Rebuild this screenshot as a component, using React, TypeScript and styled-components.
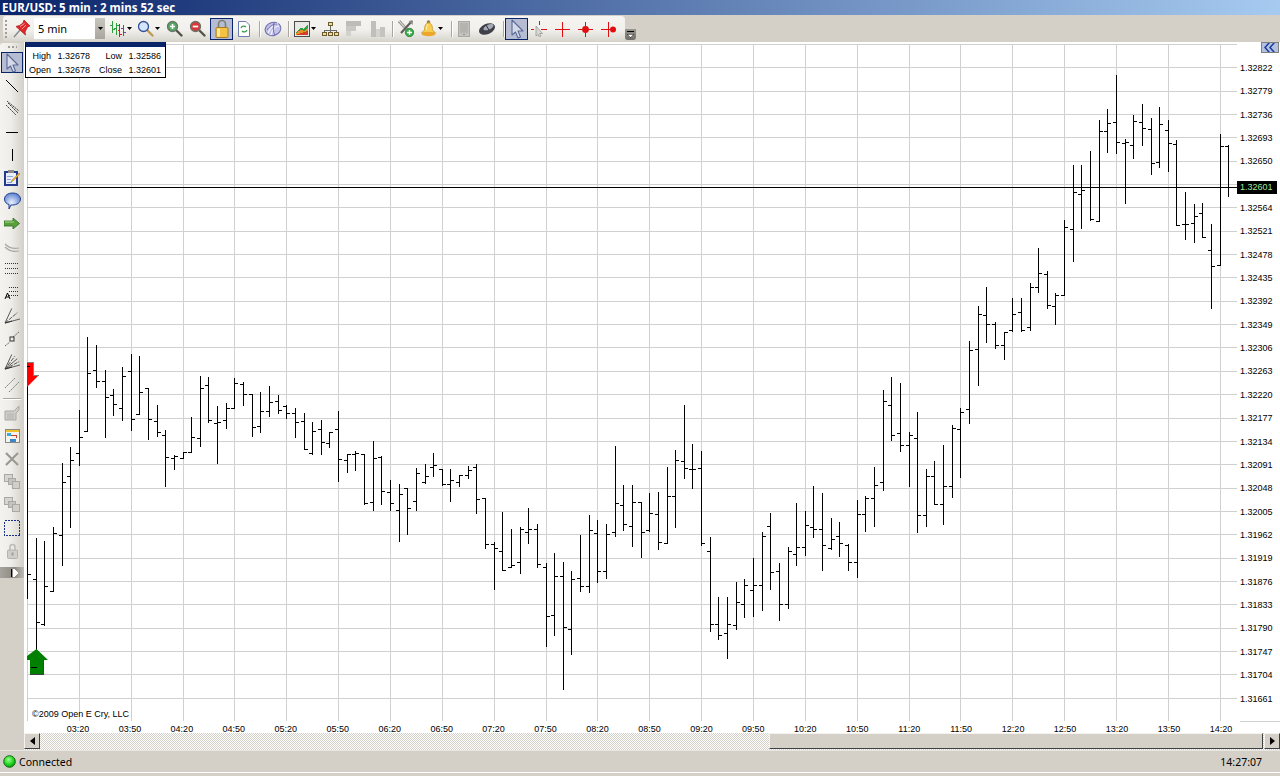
import React from "react";
import styled, { createGlobalStyle } from "styled-components";

const Global = createGlobalStyle`
  html, body { margin: 0; padding: 0; background: #d4d0c8; overflow: hidden; }
  #root { width: 1280px; height: 776px; }
`;

const UI = `"Noto Sans", "Liberation Sans", sans-serif`;
const AX = `"Liberation Sans", Arial, sans-serif`;

const Page = styled.div`
  width: 1280px; height: 776px; display: flex; flex-direction: column;
  background: #d4d0c8; overflow: hidden; font-family: ${UI}; color: #000;
`;
const TitleBar = styled.div`
  height: 15px; flex: none; padding-left: 2px; display: flex; align-items: center;
  background: linear-gradient(to right, #0a246a, #a6caf0);
  color: #fff; font-weight: 700; font-size: 11.5px; line-height: 15px; white-space: nowrap;
`;
const TopBand = styled.div`
  height: 27px; flex: none; display: flex; align-items: flex-start; padding: 1px 0 0 3px; box-sizing: border-box;
`;
const Toolbar = styled.div`
  width: 622px; height: 25px; display: flex; align-items: center; box-sizing: border-box;
  border-radius: 3px 4px 4px 3px;
  background: linear-gradient(to bottom, #f6f5f2 0%, #f1f0ec 55%, #d8d6ce 100%);
`;
const Item = styled.div<{ $w: number; $ml: number }>`
  width: ${(p) => p.$w}px; margin-left: ${(p) => p.$ml}px; flex: none;
  display: flex; align-items: center; justify-content: center; height: 22px;
`;
const Selected = styled(Item)`
  box-sizing: border-box; border: 1px solid #0a246a; background: #b6bdd2;
`;
const Sep = styled.div<{ $ml: number }>`
  width: 1px; height: 16px; flex: none; margin-left: ${(p) => p.$ml}px;
  background: #a8a69e; box-shadow: 1px 0 0 #fff;
`;
const Grip = styled.div`
  width: 2px; height: 18px; margin-left: 2px; flex: none;
  background: repeating-linear-gradient(to bottom, #a09e96 0 2px, transparent 2px 4px);
`;
const Combo = styled.div`
  width: 71px; height: 21px; margin-left: 4px; flex: none; display: flex; background: #fff;
`;
const ComboText = styled.div`
  flex: 1; padding-left: 4px; font-size: 11px; line-height: 21px; font-family: ${UI};
`;
const ComboBtn = styled.div`
  width: 10px; display: flex; align-items: center; justify-content: center;
  background: linear-gradient(to bottom, #c8c6be, #a8a69e);
`;
const Overflow = styled.div`
  width: 11px; height: 11px; margin-top: 13px; display: flex; align-items: center; justify-content: center;
  background: linear-gradient(to bottom, #9a988f, #6e6c66); border-radius: 0 0 3px 3px;
`;
const Main = styled.div`
  flex: none; height: 708px; display: flex;
`;
const LeftCol = styled.div`
  width: 24px; flex: none; padding-top: 1px;
`;
const VBar = styled.div`
  width: 24px; display: flex; flex-direction: column; align-items: center; border-radius: 3px 3px 0 0;
  background: linear-gradient(to right, #f4f3ef 0%, #eeede8 45%, #d2d0c8 100%);
`;
const VGrip = styled.div`
  width: 9px; height: 2px; margin: 3px 0 3px;
  background: repeating-linear-gradient(to right, #a09e96 0 2px, transparent 2px 4px);
`;
const VTool = styled.div<{ $sel?: boolean }>`
  width: 22px; height: 23px; flex: none; display: flex; align-items: center; justify-content: center; box-sizing: border-box;
  ${(p) => (p.$sel ? "border: 1px solid #0a246a; background: #b6bdd2; height: 21px; margin: 1px 0;" : "")}
`;
const VSep = styled.div`
  width: 18px; height: 1px; flex: none; margin: 2px 0 2px; background: #a8a69e; box-shadow: 0 1px 0 #fff;
`;
const VExpand = styled.div`
  width: 24px; height: 11px; margin-top: 5px; display: flex; align-items: center; justify-content: center; padding-left: 6px; box-sizing: border-box;
  background: linear-gradient(to right, #a6a49c, #8c8a83 60%, #bdbbb3);
`;
const RightCol = styled.div`
  flex: 1; display: flex; flex-direction: column; min-width: 0;
`;
const Chart = styled.div`
  position: relative; height: 691px; background: #fff; flex: none;
  display: grid; grid-template-columns: 1213px 43px; grid-template-rows: 677px 14px; padding-top: 0;
`;
const Plot = styled.div`
  position: relative; width: 1213px; height: 677px; margin-top: 2px;
  svg { display: block; }
`;
const PriceAxis = styled.div`
  display: flex; flex-direction: column; padding: 12.8px 0 0 3px; margin-top: 2px;
`;
const Price = styled.div`
  height: 23.365px; flex: none; font-family: ${AX}; font-size: 9px; line-height: 23px; white-space: nowrap;
`;
const TimeAxis = styled.div`
  grid-column: 1 / span 2; display: flex; padding: 6px 0 0 28px;
`;
const Time = styled.div`
  width: 51.955px; flex: none; text-align: center; font-family: ${AX}; font-size: 9px; line-height: 8px;
`;
const AxisRule = styled.div`
  position: absolute; left: 1216px; right: 0; top: 679px; height: 1px; background: #d0d0d0;
`;
const LastTag = styled.div`
  position: absolute; left: 1213px; top: 139px; width: 40px; height: 13px; padding-left: 3px; box-sizing: border-box;
  background: #000; color: #9fe89f; font-family: ${AX}; font-size: 9px; line-height: 13px;
`;
const Collapse = styled.div`
  position: absolute; right: 1px; top: 0; width: 18px; height: 11px; box-sizing: border-box;
  border: 1px solid #808080; background: #b4c2e2; display: flex; align-items: center; justify-content: center;
`;
const InfoBox = styled.div`
  position: absolute; left: 1px; top: 0; width: 141px; height: 36px; box-sizing: border-box;
  border: 1px solid #000; border-top: 5px solid #0a246a; background: #fff;
  display: grid; grid-template-columns: 25px 39px 32px 39px; grid-auto-rows: 14px;
  padding-top: 2px; font-family: ${AX}; font-size: 9px; line-height: 14px; color: #000;
`;
const InfoLabel = styled.span` text-align: right; `;
const InfoValue = styled.span` text-align: right; `;
const Copy = styled.div`
  position: absolute; left: 8px; top: 664px; font-family: ${AX}; font-size: 9px; line-height: 12px; white-space: nowrap;
`;
const Scrollbar = styled.div`
  height: 17px; flex: none; display: flex;
  background: repeating-conic-gradient(#d4d0c8 0 25%, #fff 0 50%) 0 0 / 2px 2px;
`;
const ScrollBtn = styled.div`
  width: 16px; height: 16px; flex: none; box-sizing: border-box; display: flex; align-items: center; justify-content: center;
  background: #d4d0c8; border: 1px solid; border-color: #f4f3f0 #404040 #404040 #f4f3f0;
`;
const Track = styled.div` flex: 1; display: flex; `;
const Thumb = styled.div`
  margin-left: 729px; width: 494px; height: 16px; box-sizing: border-box;
  background: #d4d0c8; border: 1px solid; border-color: #f4f3f0 #404040 #404040 #f4f3f0;
`;
const Status = styled.div`
  height: 23px; flex: none; box-sizing: border-box; display: flex; align-items: center; justify-content: space-between;
  padding: 0 18px 0 3px; border-top: 1px solid #e8e6e0; border-bottom: 1px solid #fff;
  font-size: 10.5px;
`;
const StatusLeft = styled.div` display: flex; align-items: center; gap: 3px; `;

/* --- chart data --- */
type Row = [number, number, number, number, number];
const conv = (ox: number, oy: number, rows: Row[]) =>
  rows.map(([x, h, l, o, c]) => ({
    x: Math.floor(ox + x / 3), h: Math.floor(oy + h / 3), l: Math.floor(oy + l / 3),
    o: Math.floor(oy + o / 3), c: Math.floor(oy + c / 3),
  }));

const bars = [
  { x: 27, h: 363, l: 598, o: 574, c: 574 },
  ...conv(0, 470, [
    [109, 205, 537, 328, 457],
    [133, 214, 467, 463, 350],
    [160, 172, 364, 364, 190],
  ]),
  { x: 62, h: 463, l: 565, o: 535, c: 482 },
  { x: 70, h: 447, l: 527, o: 476, c: 460 },
  ...conv(20, 330, [
    [178,241,407,370,322],[202,22,304,304,130],[229,46,173,121,154],[256,121,323,154,202],
    [280,178,257,196,223],[307,112,272,235,139],[334,73,301,124,268],[358,79,253,253,187],
    [385,175,329,175,268],[412,226,320,274,307],[436,301,469,316,382],[463,376,419,385,379],
    [490,367,385,385,367],[514,262,367,367,322],[541,139,350,325,175],[565,142,277,166,271],
    [592,229,401,280,277],[619,220,296,271,235],[643,145,235,235,160],
  ]),
  ...conv(240, 370, [
    [10,38,107,42,73],[37,72,200,72,172],[61,67,188,168,124],[88,48,140,124,97],[115,76,130,94,121],
    [139,105,145,108,130],[166,115,203,130,157],[193,130,238,154,238],[217,156,253,250,184],
    [244,151,254,178,217],[268,187,233,220,187],[295,124,335,178,268],[322,252,308,271,253],
    [346,245,302,253,249],[373,253,403,253,401],[400,214,422,397,265],[424,260,404,262,364],
    [451,331,422,367,400],[478,343,515,421,373],[502,356,494,356,415],[529,295,422,394,310],
    [556,283,340,338,319],[580,250,320,292,286],[607,299,346,299,343],[631,298,395,343,331],
    [658,316,350,337,316],[685,289,326,316,301],[709,284,431,292,388],[736,385,536,385,523],
    [763,518,659,523,535],[787,427,601,544,601],[814,478,592,592,586],[841,472,611,577,478],
    [865,415,521,487,478],[892,463,593,478,583],[919,580,830,592,739],[943,550,797,736,619],
    [970,577,958,619,772],[994,604,854,778,628],[1021,496,664,625,649],[1048,436,668,649,481],
    [1072,451,638,490,604],[1099,463,626,604,493],[1126,229,499,487,400],
  ]),
  ...conv(610, 370, [
    [40,346,482,406,463],[67,346,530,469,397],[94,397,563,397,487],[118,370,485,481,430],
    [145,367,539,433,517],[172,292,520,520,379],[196,241,473,379,271],[223,106,326,274,295],
    [247,223,356,298,298],[274,244,526,295,520],[301,502,785,544,763],[325,682,809,763,796],
    [352,682,866,790,763],[379,637,779,766,697],[403,628,743,703,646],[430,565,740,661,646],
    [457,488,722,646,499],[481,430,659,469,607],[508,580,752,604,703],[535,532,716,703,544],
    [559,400,587,553,532],[586,424,557,532,466],[610,349,503,472,478],[637,370,602,478,526],
    [664,445,539,535,508],[688,457,560,499,520],[715,524,602,526,577],[742,391,623,577,433],
    [766,379,485,433,385],[793,292,470,385,346],[820,61,362,337,94],[844,22,212,106,196],
    [871,40,245,190,226],[898,187,350,226,196],[922,127,488,205,436],[949,298,470,436,319],
    [973,274,403,319,403],[1000,226,464,403,349],[1027,166,383,349,175],[1051,115,323,178,127],
  ]),
  ...conv(950, 70, [
    [58,814,1061,1018,841],[85,709,947,838,733],[109,652,818,736,763],[136,757,836,763,826],
    [163,787,869,826,787],[187,685,784,781,733],[214,685,784,727,781],[241,640,781,772,652],
    [265,535,667,652,610],[292,604,715,613,706],[316,670,764,709,676],[343,451,677,677,472],
    [370,286,575,478,367],[394,286,476,373,361],[421,244,451,352,448],[448,151,454,454,184],
    [472,118,247,184,160],[499,16,250,157,217],[526,208,400,220,217],[550,136,265,226,154],
    [577,103,226,157,175],[604,145,313,178,280],[628,112,292,277,163],[655,151,304,181,220],
    [679,211,466,223,466],[706,367,508,463,463],[733,403,517,460,439],[757,400,502,430,502],
    [784,463,715,541,589],[811,193,586,586,229],[835,226,379,229,352],
  ]),
];

const gridY = [67,91,114,137,161,184,207,231,254,277,301,324,347,371,394,418,441,464,488,511,534,558,581,604,628,651,674,698];
const gridX = [79,131,183,234,286,338,390,442,494,546,597,649,701,753,805,857,909,960,1012,1064,1116,1168,1220];
const times = ["03:20","03:50","04:20","04:50","05:20","05:50","06:20","06:50","07:20","07:50","08:20","08:50","09:20","09:50","10:20","10:50","11:20","11:50","12:20","12:50","13:20","13:50","14:20"];
const prices = Array.from({ length: 28 }, (_, i) => (i === 5 ? "" : (1.32822 - i * 0.00043).toFixed(5)));

const ChartSvg = () => {
  let d = "";
  bars.forEach((b) => {
    d += `M${b.x + 0.5} ${b.h}V${b.l + 1}`;
    if (b.x > 27) d += `M${b.x - 3} ${b.o + 0.5}H${b.x}`;
    d += `M${b.x + 1} ${b.c + 0.5}H${b.x + 4}`;
  });
  let g = "M27 44.5H1237M27 721.5H1237M1237.5 44V722M27.5 44V722";
  gridY.forEach((y) => (g += `M27 ${y + 0.5}H1237`));
  gridX.forEach((x) => (g += `M${x + 0.5} 44V722`));
  return (
    <svg width={1213} height={677} viewBox="24 44 1213 677" shapeRendering="crispEdges">
      <path d={g} stroke="#d0d0d0" fill="none" />
      <path d={d} stroke="#000" fill="none" />
      <path d="M27 187.5H1237" stroke="#000" />
      <polygon points="27,362 33,362 33,375 39,375 27,387" fill="#ff0000" shapeRendering="auto" />
      <path d="M27 362.5H33.5V375.5H38.5" stroke="#808080" fill="none" />
      <path d="M27 366.5H30" stroke="#000" />
      <polygon points="36.5,649 48,660 43,660 43,674 30,674 30,660 27,660 27,656" fill="#008000" shapeRendering="auto" />
      <path d="M31 667.5H37" stroke="#000" />
      <path d="M43.5 660V674.5H30" stroke="#404040" fill="none" />
    </svg>
  );
};

/* --- icons --- */
const Caret = ({ c = "#000" }: { c?: string }) => (
  <svg width="5" height="3" viewBox="0 0 5 3"><polygon points="0,0 5,0 2.5,3" fill={c} /></svg>
);
const Pin = () => (
  <svg width="17" height="18" viewBox="0 0 17 18">
    <path d="M1 17L7 10" stroke="#8a8a8a" strokeWidth="1.4" />
    <path d="M11 0L17 6L14.5 7L12 12L12.5 15L3 6.5L6.5 5.5L10 3Z" fill="#e2262a" stroke="#b02020" strokeWidth=".8" />
    <path d="M7 6.5L11.5 3.5M9 9L13 5" stroke="#f4a0a0" />
  </svg>
);
const BarsIcon = () => (
  <svg width="16" height="18" viewBox="0 0 16 18" shapeRendering="crispEdges">
    <path d="M2.5 1V13M0 5.5H2M3 9.5H5" stroke="#2e9e3f" fill="none" />
    <path d="M6.5 3V15M4 8.5H6M7 5.5H9" stroke="#2e9e3f" fill="none" />
    <path d="M9.5 4V17M8 10.5H9M10 14.5H12" stroke="#e01818" fill="none" />
    <path d="M13.5 5V16M11 8.5H13M14 12.5H16" stroke="#7b3fa8" fill="none" />
  </svg>
);
const Lens = ({ fill, mark }: { fill: string; mark?: "plus" | "minus" }) => (
  <svg width="17" height="17" viewBox="0 0 17 17">
    <path d="M10.5 10.5L15.5 15.5" stroke={mark ? "#55524a" : "#c09a50"} strokeWidth="2.4" strokeLinecap="round" />
    <circle cx="6.5" cy="6.5" r="5" fill={fill} stroke={mark ? "#6a7468" : "#33509a"} strokeWidth="1.3" />
    {mark === "plus" && <path d="M4 6.5H9M6.5 4V9" stroke="#fff" strokeWidth="1.6" />}
    {mark === "minus" && <path d="M3.8 6.5H9.2" stroke="#fff" strokeWidth="1.8" />}
  </svg>
);
const LockIcon = () => (
  <svg width="14" height="20" viewBox="0 0 14 20">
    <path d="M3.5 9V5a3.5 3.5 0 0 1 7 0v4" fill="none" stroke="#7c7c74" strokeWidth="1.6" />
    <rect x="1" y="8.5" width="12" height="10" rx="1" fill="#f4c343" stroke="#a87e20" />
    <rect x="2" y="9.5" width="3" height="8" fill="#fbe7a0" />
  </svg>
);
const DocIcon = () => (
  <svg width="12" height="16" viewBox="0 0 12 16">
    <path d="M.5 .5H8L11.5 4V15.5H.5Z" fill="#fff" stroke="#6a7fb0" />
    <path d="M3 7a3 3 0 0 1 5-1M9 9a3 3 0 0 1-5 1" fill="none" stroke="#38a048" strokeWidth="1.3" />
  </svg>
);
const Globe = () => (
  <svg width="18" height="16" viewBox="0 0 18 16">
    <ellipse cx="9" cy="8" rx="8" ry="6.5" transform="rotate(-18 9 8)" fill="#c4c3ea" stroke="#6f6cae" />
    <path d="M4 12C7 6 10 3 14 2M7 14C8 9 11 5 15 5" fill="none" stroke="#f4f4ff" strokeWidth="1.2" />
    <path d="M3 9C6 5 9 3 13 3M10 2C9 7 9 11 11 14" fill="none" stroke="#6f6cae" />
  </svg>
);
const ChartIcon = () => (
  <svg width="16" height="16" viewBox="0 0 16 16" shapeRendering="crispEdges">
    <rect x=".5" y=".5" width="15" height="15" fill="#e8e8e4" stroke="#4c4c4c" />
    <polygon points="2,14 2,11 7,7 10,8 14,3 14,14" fill="#2f9e44" />
    <polygon points="2,14 2,12 7,9 10,10 14,6 14,14" fill="#e89024" />
    <polygon points="2,14 7,12 14,10 14,14" fill="#d63c2a" />
  </svg>
);
const OrgIcon = () => (
  <svg width="17" height="14" viewBox="0 0 17 14" shapeRendering="crispEdges">
    <path d="M8.5 3V8M2.5 8H14.5M2.5 8V10M8.5 8V10M14.5 8V10" stroke="#6a6a64" fill="none" />
    <rect x="6.5" y=".5" width="4" height="3" fill="#f0dc9c" stroke="#6a5a2c" />
    <rect x=".5" y="10.5" width="4" height="3" fill="#f0dc9c" stroke="#6a5a2c" />
    <rect x="6.5" y="10.5" width="4" height="3" fill="#f0dc9c" stroke="#6a5a2c" />
    <rect x="12.5" y="10.5" width="4" height="3" fill="#f0dc9c" stroke="#6a5a2c" />
  </svg>
);
const GrayF = () => (
  <svg width="15" height="15" viewBox="0 0 15 15" shapeRendering="crispEdges">
    <rect x="0" y="0" width="15" height="5" fill="#bdbcb6" />
    <rect x="0" y="5" width="10" height="5" fill="#c9c8c2" />
    <rect x="0" y="10" width="5" height="5" fill="#d2d1cb" />
  </svg>
);
const GrayBars = () => (
  <svg width="16" height="16" viewBox="0 0 16 16" shapeRendering="crispEdges">
    <rect x="1" y="0" width="5" height="16" fill="#c0bfb9" />
    <rect x="6" y="8" width="4" height="8" fill="#d4d3cd" />
    <rect x="10" y="6" width="5" height="10" fill="#c4c3bd" />
  </svg>
);
const ToolsIcon = () => (
  <svg width="16" height="17" viewBox="0 0 16 17">
    <path d="M1 1L11 12" stroke="#9c9c96" strokeWidth="3" />
    <path d="M1 1L11 12" stroke="#e8e8e4" strokeWidth="1" />
    <path d="M14 1L3 13" stroke="#5f5f5a" strokeWidth="2.2" />
    <path d="M10.5 1L15 .5L14.5 5Z" fill="#8a8a84" />
    <circle cx="11.5" cy="12.5" r="4.2" fill="#38a848" stroke="#1e7a2c" strokeWidth=".7" />
    <path d="M9 12.5H14M11.5 10V15" stroke="#fff" strokeWidth="1.4" />
  </svg>
);
const Bell = () => (
  <svg width="15" height="17" viewBox="0 0 15 17">
    <circle cx="7.5" cy="2" r="1.8" fill="#9a8242" />
    <path d="M3.5 10C3.5 6 4.5 3 7.5 3S11.5 6 11.5 10L14.5 13H.5Z" fill="#f8cf52" stroke="#c8962c" strokeWidth=".8" />
    <ellipse cx="7.5" cy="14" rx="7" ry="2.2" fill="#eda62c" />
    <path d="M5.5 10C5.5 7 6 5 7 4" stroke="#fdf0b0" fill="none" />
  </svg>
);
const Phone = () => (
  <svg width="12" height="16" viewBox="0 0 12 16" shapeRendering="crispEdges">
    <rect x=".5" y=".5" width="11" height="15" rx="1" fill="#c4c3bd" stroke="#a9a8a2" />
    <rect x="2" y="2" width="8" height="10" fill="#b4b3ad" />
    <rect x="5" y="13" width="2" height="1" fill="#8c8b86" />
  </svg>
);
const Mouse = () => (
  <svg width="16" height="14" viewBox="0 0 16 14">
    <ellipse cx="8" cy="7" rx="8.4" ry="5.2" transform="rotate(-24 8 7)" fill="#3f4048" />
    <ellipse cx="9.5" cy="5.2" rx="5.4" ry="2.4" transform="rotate(-24 9.5 5.2)" fill="#a8aab6" />
    <path d="M7 3L10 8" stroke="#2c2d33" />
  </svg>
);
const Cursor = ({ s = 1 }: { s?: number }) => (
  <svg width={14 * s} height={20 * s} viewBox="0 0 14 20">
    <path d="M2 1V16L5.5 13L8 19L10.5 18L8 12H13Z" fill="#d6d9e8" stroke="#5a6a96" strokeWidth="1.1" strokeLinejoin="round" />
  </svg>
);
const CrossCursor = () => (
  <svg width="16" height="16" viewBox="0 0 16 16">
    <path d="M8 0V4M0 8H3M10 8H16" stroke="#e01010" shapeRendering="crispEdges" />
    <path d="M5 5V15L7 13.5L8.5 16L10 15L8.5 12.5H11.5Z" fill="#d8d8d4" stroke="#9a9a94" strokeWidth=".8" />
  </svg>
);
const Cross = ({ v }: { v: 0 | 1 | 2 }) => (
  <svg width="16" height="16" viewBox="0 0 16 16">
    <path d="M8 0V16M0 8H16" stroke="#e01010" shapeRendering="crispEdges" transform="translate(.5 .5)" />
    {v === 1 && <circle cx="8.5" cy="8.5" r="3.4" fill="#e01010" />}
    {v === 2 && <circle cx="13" cy="8.5" r="3" fill="#e01010" />}
  </svg>
);
const DownMenu = () => (
  <svg width="7" height="7" viewBox="0 0 7 7" shapeRendering="crispEdges">
    <path d="M0 .5H7" stroke="#000" /><polygon points="0,3 7,3 3.5,7" fill="#fff" stroke="#000" strokeWidth=".5" />
  </svg>
);

const L = ({ d, w = 1, c = "#000", dash }: { d: string; w?: number; c?: string; dash?: string }) => (
  <svg width="18" height="18" viewBox="0 0 18 18"><path d={d} stroke={c} strokeWidth={w} fill="none" strokeDasharray={dash} /></svg>
);
const Notepad = () => (
  <svg width="16" height="16" viewBox="0 0 16 16" shapeRendering="crispEdges">
    <rect x="1" y="2" width="12" height="13" fill="#e8eefb" stroke="#243a8e" strokeWidth="1.2" />
    <rect x="4" y="0" width="6" height="3" fill="#8c8c84" />
    <path d="M3 6H9M3 9H7M3 12H8" stroke="#8ea4d8" />
    <path d="M15 3L8 10L7 12L9 11L16 4Z" fill="#f0b030" stroke="#a87a20" strokeWidth=".5" shapeRendering="auto" />
  </svg>
);
const Bubble = () => (
  <svg width="17" height="18" viewBox="0 0 17 18">
    <defs><radialGradient id="bb" cx=".45" cy=".6" r=".7"><stop offset="0" stopColor="#eaf2ff" /><stop offset="1" stopColor="#4a72c8" /></radialGradient></defs>
    <path d="M8.5 1C13 1 16.5 3.5 16.5 7S13 13 8.5 13L7 13L5 17L5 12.5C2.5 12 .5 10 .5 7C.5 3.5 4 1 8.5 1Z" fill="url(#bb)" stroke="#23408e" />
  </svg>
);
const GreenArrow = () => (
  <svg width="16" height="11" viewBox="0 0 16 11">
    <path d="M0 3H9V0L15.5 5.5L9 11V8H0Z" fill="#5aa03a" stroke="#2f6a24" strokeWidth=".8" />
    <path d="M1 4H10" stroke="#a8d888" />
  </svg>
);
const Dots = ({ a }: { a?: boolean }) => (
  <svg width="16" height="15" viewBox="0 0 16 15" shapeRendering="crispEdges">
    {(a ? [2, 6, 10] : [1, 6, 11]).map((y) => <path key={y} d={`M${a ? 5 : 1} ${y}.5H15`} stroke="#333" strokeDasharray="1 1" />)}
    {a && <path d="M1 14L3.5 8L6 14M2 12H5" stroke="#000" fill="none" shapeRendering="auto" />}
  </svg>
);
const Fan = ({ n }: { n: number }) => (
  <svg width="16" height="16" viewBox="0 0 16 16">
    {Array.from({ length: n }, (_, i) => {
      const a = -65 + (i * 50) / (n - 1 || 1);
      const r = (a * Math.PI) / 180;
      return <path key={i} d={`M1 15L${1 + 16 * Math.cos(r)} ${15 + 16 * Math.sin(r)}`} stroke="#5a5a5a" strokeWidth="1" strokeDasharray={i % 2 ? "4 1" : undefined} />;
    })}
    <path d="M1 15L8 13" stroke="#333" />
  </svg>
);
const Ray = () => (
  <svg width="16" height="16" viewBox="0 0 16 16">
    <path d="M1 15L6 11M9 6L15 1" stroke="#6a6a6a" strokeWidth="1" strokeDasharray="2 1" />
    <rect x="6" y="6" width="4" height="4" fill="none" stroke="#333" />
  </svg>
);
const GrayBox = () => (
  <svg width="16" height="16" viewBox="0 0 16 16">
    <path d="M1 6H10L15 1V5L12 8V15H1Z" fill="#cfcec8" stroke="#a9a8a2" />
    <path d="M3 9H10M3 11H10M3 13H10" stroke="#b4b3ad" />
  </svg>
);
const Board = () => (
  <svg width="15" height="14" viewBox="0 0 15 14" shapeRendering="crispEdges">
    <rect x=".5" y=".5" width="14" height="13" fill="#f4f2ea" stroke="#8a8a84" />
    <rect x="1" y="1" width="13" height="2" fill="#f0c02c" />
    <rect x="2" y="4" width="4" height="3" fill="#3aa8d8" />
    <rect x="5" y="10" width="6" height="3" fill="#3a88c8" />
    <path d="M6 6H11V9" stroke="#c04030" fill="none" />
  </svg>
);
const GrayX = () => <L d="M3 3L15 15M15 3L3 15" w={2.2} c="#9a9a94" />;
const Copies = () => (
  <svg width="16" height="15" viewBox="0 0 16 15" shapeRendering="crispEdges">
    <rect x=".5" y=".5" width="8" height="7" fill="#d6d5cf" stroke="#a9a8a2" />
    <rect x="4.5" y="4.5" width="7" height="6" fill="#c4c3bd" stroke="#a9a8a2" />
    <rect x="8.5" y="7.5" width="7" height="7" fill="#cfcec8" stroke="#a9a8a2" />
  </svg>
);
const DotRect = () => (
  <svg width="16" height="16" viewBox="0 0 16 16" shapeRendering="crispEdges">
    <rect x=".5" y=".5" width="15" height="15" fill="none" stroke="#1a2f8a" strokeDasharray="2 1" />
  </svg>
);
const GrayLock = () => (
  <svg width="11" height="16" viewBox="0 0 11 16">
    <path d="M3 7V4a2.5 2.5 0 0 1 5 0v3" fill="none" stroke="#bdbcb6" strokeWidth="1.6" />
    <rect x=".5" y="7" width="10" height="8.5" rx="1" fill="#cfcec8" stroke="#b4b3ad" />
    <rect x="4.5" y="9.5" width="2" height="3" fill="#a0a09a" />
  </svg>
);

export default function App() {
  return (
    <Page>
      <Global />
      <TitleBar>EUR/USD: 5 min : 2 mins 52 sec</TitleBar>
      <TopBand>
        <Toolbar>
          <Grip />
          <Item $w={17} $ml={6}><Pin /></Item>
          <Combo>
            <ComboText>5 min</ComboText>
            <ComboBtn><Caret /></ComboBtn>
          </Combo>
          <Item $w={16} $ml={5}><BarsIcon /></Item>
          <Item $w={5} $ml={1}><Caret /></Item>
          <Item $w={17} $ml={5}><Lens fill="#d4e6fa" /></Item>
          <Item $w={5} $ml={1}><Caret /></Item>
          <Item $w={17} $ml={6}><Lens fill="#54a860" mark="plus" /></Item>
          <Item $w={17} $ml={6}><Lens fill="#d83838" mark="minus" /></Item>
          <Selected $w={23} $ml={4}><LockIcon /></Selected>
          <Item $w={12} $ml={5}><DocIcon /></Item>
          <Sep $ml={9} />
          <Item $w={18} $ml={4}><Globe /></Item>
          <Sep $ml={6} />
          <Item $w={16} $ml={5}><ChartIcon /></Item>
          <Item $w={5} $ml={1}><Caret /></Item>
          <Item $w={17} $ml={6}><OrgIcon /></Item>
          <Item $w={15} $ml={7}><GrayF /></Item>
          <Item $w={16} $ml={9}><GrayBars /></Item>
          <Sep $ml={6} />
          <Item $w={16} $ml={5}><ToolsIcon /></Item>
          <Item $w={15} $ml={7}><Bell /></Item>
          <Item $w={5} $ml={2}><Caret /></Item>
          <Sep $ml={8} />
          <Item $w={12} $ml={6}><Phone /></Item>
          <Item $w={16} $ml={9}><Mouse /></Item>
          <Sep $ml={8} />
          <Selected $w={23} $ml={1}><Cursor /></Selected>
          <Item $w={16} $ml={3}><CrossCursor /></Item>
          <Item $w={16} $ml={7}><Cross v={0} /></Item>
          <Item $w={16} $ml={7}><Cross v={1} /></Item>
          <Item $w={16} $ml={7}><Cross v={2} /></Item>
        </Toolbar>
        <Overflow><DownMenu /></Overflow>
      </TopBand>
      <Main>
        <LeftCol>
          <VBar>
            <VGrip />
            <VTool $sel><Cursor /></VTool>
            <VTool><L d="M3 3L15 15" /></VTool>
            <VTool><L d="M3 5L13 15M5 3L15 13M4 1L16 11" c="#444" dash="2 .6" /></VTool>
            <VTool><L d="M3 9.5H15" /></VTool>
            <VTool><L d="M9.5 3V15" /></VTool>
            <VTool><Notepad /></VTool>
            <VTool><Bubble /></VTool>
            <VTool><GreenArrow /></VTool>
            <VTool><L d="M2 6C6 10 11 11 16 10M2 9C6 13 11 14 16 13" c="#a9a8a2" w={1.2} /></VTool>
            <VTool><Dots /></VTool>
            <VTool><Dots a /></VTool>
            <VTool><Fan n={3} /></VTool>
            <VTool><Ray /></VTool>
            <VTool><Fan n={5} /></VTool>
            <VTool><L d="M2 12L12 2M6 16L16 6" c="#7a7a74" dash="2 1" /></VTool>
            <VSep />
            <VTool><GrayBox /></VTool>
            <VTool><Board /></VTool>
            <VTool><GrayX /></VTool>
            <VTool><Copies /></VTool>
            <VTool><Copies /></VTool>
            <VTool><DotRect /></VTool>
            <VTool><GrayLock /></VTool>
            <VExpand>
              <svg width="8" height="8" viewBox="0 0 8 8" shapeRendering="crispEdges">
                <rect x="0" y="0" width="1" height="8" fill="#000" /><rect x="2" y="0" width="1" height="8" fill="#fff" />
                <polygon points="3,0 8,4 3,8" fill="#fff" />
              </svg>
            </VExpand>
          </VBar>
        </LeftCol>
        <RightCol>
          <Chart>
            <Plot>
              <ChartSvg />
              <Copy>©2009 Open E Cry, LLC</Copy>
            </Plot>
            <PriceAxis>
              {prices.map((p, i) => <Price key={i}>{p}</Price>)}
            </PriceAxis>
            <TimeAxis>
              {times.map((t) => <Time key={t}>{t}</Time>)}
            </TimeAxis>
            <AxisRule />
            <LastTag>1.32601</LastTag>
            <Collapse>
              <svg width="14" height="9" viewBox="0 0 14 9">
                <path d="M5 0L1 4.5L5 9H7L3 4.5L7 0ZM10 0L6 4.5L10 9H12L8 4.5L12 0Z" fill="#1c3aa0" />
              </svg>
            </Collapse>
            <InfoBox>
              <InfoLabel>High</InfoLabel><InfoValue>1.32678</InfoValue>
              <InfoLabel>Low</InfoLabel><InfoValue>1.32586</InfoValue>
              <InfoLabel>Open</InfoLabel><InfoValue>1.32678</InfoValue>
              <InfoLabel>Close</InfoLabel><InfoValue>1.32601</InfoValue>
            </InfoBox>
          </Chart>
          <Scrollbar>
            <ScrollBtn>
              <svg width="5" height="8" viewBox="0 0 5 8"><polygon points="5,0 0,4 5,8" fill="#000" /></svg>
            </ScrollBtn>
            <Track><Thumb /></Track>
            <ScrollBtn>
              <svg width="5" height="8" viewBox="0 0 5 8"><polygon points="0,0 5,4 0,8" fill="#000" /></svg>
            </ScrollBtn>
          </Scrollbar>
        </RightCol>
      </Main>
      <Status>
        <StatusLeft>
          <svg width="13" height="13" viewBox="0 0 13 13">
            <defs><radialGradient id="led" cx=".42" cy=".35" r=".7"><stop offset="0" stopColor="#9dff8c" /><stop offset=".6" stopColor="#1fd61f" /><stop offset="1" stopColor="#0a8a0a" /></radialGradient></defs>
            <circle cx="6.5" cy="6.5" r="5.8" fill="url(#led)" stroke="#0f6a12" />
          </svg>
          <span>Connected</span>
        </StatusLeft>
        <span>14:27:07</span>
      </Status>
    </Page>
  );
}
